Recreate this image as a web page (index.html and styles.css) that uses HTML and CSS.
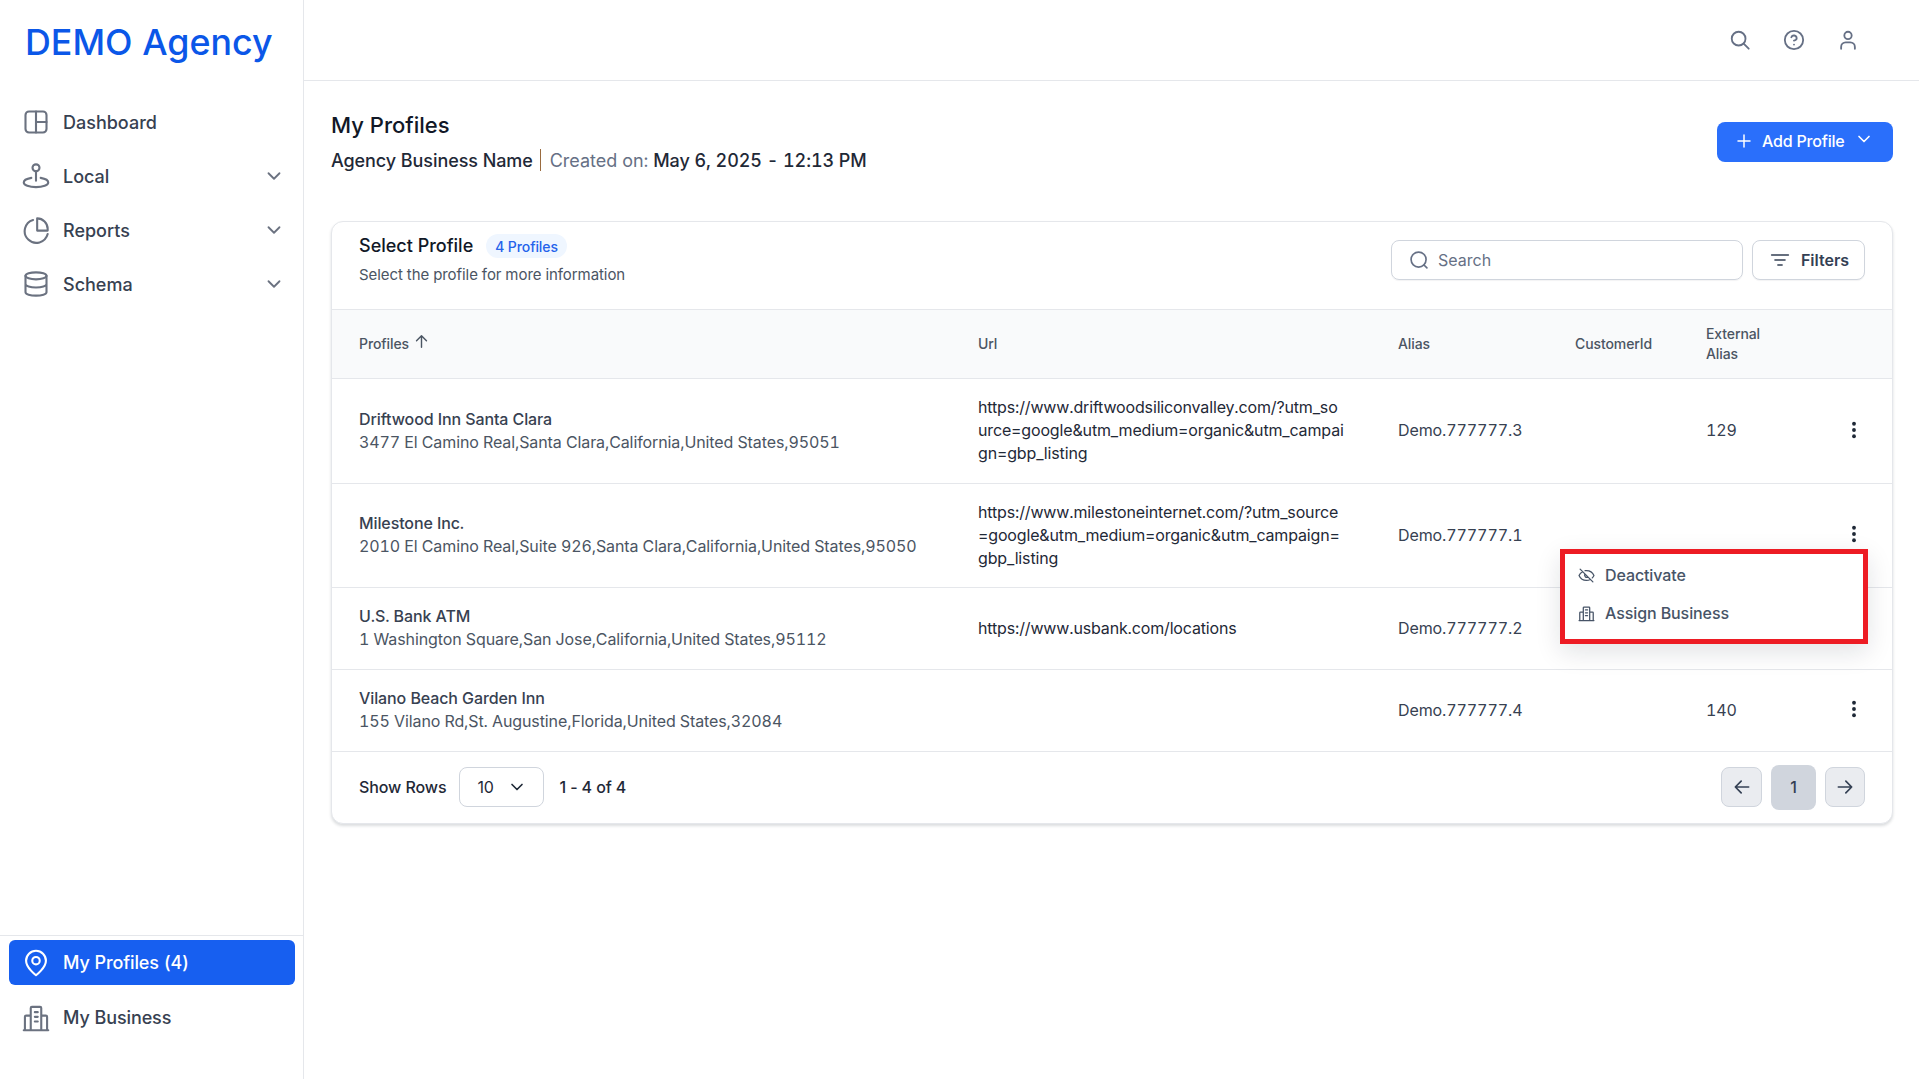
FILE: index.html
```html
<!DOCTYPE html>
<html lang="en">

<head>
    <meta charset="UTF-8">
    <meta name="viewport" content="width=device-width, initial-scale=1.0">
    <link rel="stylesheet" href="styles.css">
    <title>My Profiles</title>
</head>

<body>
    <aside class="sidebar">
        <div class="logo">DEMO Agency</div>
        <nav class="nav">
            <a class="nav-item">
                <svg class="nav-icon" viewBox="0 0 24 24"><rect x="3" y="3" width="18" height="18" rx="3"/><path d="M12 3v18M12 12h9"/></svg>
                <span>Dashboard</span>
            </a>
            <a class="nav-item">
                <svg class="nav-icon" viewBox="0 0 24 24"><circle cx="12" cy="5" r="3"/><path d="M12 8v8M8 13.6C4.500 14.200 1.500 15.400 1.500 17.500c0 2.400 4.700 4 10.500 4s10.500-1.600 10.500-4c0-2.100-3-3.300-6.500-3.900"/></svg>
                <span>Local</span>
                <svg class="nav-chevron" viewBox="0 0 24 24"><path d="M6 9l6 6 6-6"/></svg>
            </a>
            <a class="nav-item">
                <svg class="nav-icon" viewBox="0 0 24 24"><path d="M9.500 3.400A10 10 0 1 0 22 15.500"/><path d="M13 2a9 9 0 0 1 9 9v1.500h-9z"/></svg>
                <span>Reports</span>
                <svg class="nav-chevron" viewBox="0 0 24 24"><path d="M6 9l6 6 6-6"/></svg>
            </a>
            <a class="nav-item">
                <svg class="nav-icon" viewBox="0 0 24 24"><ellipse cx="12" cy="5" rx="9" ry="3"/><path d="M3 5v14c0 1.700 4 3 9 3s9-1.300 9-3V5M3 12c0 1.700 4 3 9 3s9-1.300 9-3"/></svg>
                <span>Schema</span>
                <svg class="nav-chevron" viewBox="0 0 24 24"><path d="M6 9l6 6 6-6"/></svg>
            </a>
        </nav>
        <div class="nav-bottom">
            <a class="nav-item active">
                <svg class="nav-icon" viewBox="0 0 24 24"><path d="M12 22.500s8.500-6.500 8.500-12.500a8.500 8.500 0 0 0-17 0c0 6 8.500 12.500 8.500 12.500z"/><circle cx="12" cy="10" r="3.200"/></svg>
                <span>My Profiles (4)</span>
            </a>
            <a class="nav-item">
                <svg class="nav-icon" viewBox="0 0 24 24"><path d="M1.500 22.500h21M7.500 22V3.500a1 1 0 0 1 1-1h7a1 1 0 0 1 1 1V22M7.500 10H3.500a1 1 0 0 0-1 1v11M16.500 10h4a1 1 0 0 1 1 1v11M11 7h2.500M11 11h2.500M11 15h2.500"/></svg>
                <span>My Business</span>
            </a>
        </div>
    </aside>

    <div class="content">
        <header class="topbar">
            <svg class="top-icon" viewBox="0 0 24 24"><circle cx="10.500" cy="10.500" r="7.500"/><path d="M16 16l5.500 5.500"/></svg>
            <svg class="top-icon" viewBox="0 0 24 24"><circle cx="12" cy="12" r="10"/><path d="M9.100 9a3 3 0 0 1 5.800 1c0 2-3 2.700-3 2.700M12 17h.01"/></svg>
            <svg class="top-icon" viewBox="0 0 24 24"><circle cx="12" cy="7" r="4"/><path d="M4.500 21.500v-2a5 5 0 0 1 5-5h5a5 5 0 0 1 5 5v2"/></svg>
        </header>

        <main class="page">
            <div class="page-head">
                <div>
                    <h1>My Profiles</h1>
                    <p class="page-sub">Agency Business Name<span class="sep"></span><span class="muted">Created on:</span> <span class="date">May 6, 2025 - 12:13 PM</span></p>
                </div>
                <button class="btn-primary">
                    <svg class="btn-plus" viewBox="0 0 24 24"><path d="M12 4v16M4 12h16"/></svg>
                    <span>Add Profile</span>
                    <svg class="btn-caret" viewBox="0 0 24 24"><path d="M6 9l6 6 6-6"/></svg>
                </button>
            </div>

            <section class="card">
                <div class="card-head">
                    <div>
                        <div class="card-title-row">
                            <h2>Select Profile</h2>
                            <span class="badge">4 Profiles</span>
                        </div>
                        <p class="card-sub">Select the profile for more information</p>
                    </div>
                    <div class="card-tools">
                        <div class="search">
                            <svg viewBox="0 0 24 24"><circle cx="11.500" cy="11.500" r="9"/><path d="M18 18l3.500 3.500"/></svg>
                            <span>Search</span>
                        </div>
                        <button class="btn-filter">
                            <svg viewBox="0 0 24 24"><path d="M2 6h20M6 12h12M9.500 18h5"/></svg>
                            <span>Filters</span>
                        </button>
                    </div>
                </div>

                <table class="table">
                    <colgroup>
                        <col class="col-profile">
                        <col class="col-url">
                        <col class="col-alias">
                        <col class="col-customer">
                        <col class="col-external">
                        <col>
                    </colgroup>
                    <thead>
                        <tr>
                            <th>Profiles <svg class="sort-icon" viewBox="0 0 24 24"><path d="M12 20V4M5 11l7-7 7 7"/></svg></th>
                            <th>Url</th>
                            <th>Alias</th>
                            <th>CustomerId</th>
                            <th>External<br>Alias</th>
                            <th></th>
                        </tr>
                    </thead>
                    <tbody>
                        <tr class="row-tall">
                            <td>
                                <div class="name">Driftwood Inn Santa Clara</div>
                                <div class="address">3477 El Camino Real,Santa Clara,California,United States,95051</div>
                            </td>
                            <td class="url">https://www.driftwoodsiliconvalley.com/?utm_source=google&amp;utm_medium=organic&amp;utm_campaign=gbp_listing</td>
                            <td>Demo.777777.3</td>
                            <td></td>
                            <td>129</td>
                            <td class="actions"><svg class="dots" viewBox="0 0 24 24"><circle cx="12" cy="4.500" r="2.300"/><circle cx="12" cy="12" r="2.300"/><circle cx="12" cy="19.500" r="2.300"/></svg></td>
                        </tr>
                        <tr class="row-tall row-second">
                            <td>
                                <div class="name">Milestone Inc.</div>
                                <div class="address">2010 El Camino Real,Suite 926,Santa Clara,California,United States,95050</div>
                            </td>
                            <td class="url">https://www.milestoneinternet.com/?utm_source=google&amp;utm_medium=organic&amp;utm_campaign=gbp_listing</td>
                            <td>Demo.777777.1</td>
                            <td></td>
                            <td></td>
                            <td class="actions"><svg class="dots" viewBox="0 0 24 24"><circle cx="12" cy="4.500" r="2.300"/><circle cx="12" cy="12" r="2.300"/><circle cx="12" cy="19.500" r="2.300"/></svg></td>
                        </tr>
                        <tr>
                            <td>
                                <div class="name">U.S. Bank ATM</div>
                                <div class="address">1 Washington Square,San Jose,California,United States,95112</div>
                            </td>
                            <td class="url">https://www.usbank.com/locations</td>
                            <td>Demo.777777.2</td>
                            <td></td>
                            <td></td>
                            <td></td>
                        </tr>
                        <tr>
                            <td>
                                <div class="name">Vilano Beach Garden Inn</div>
                                <div class="address">155 Vilano Rd,St. Augustine,Florida,United States,32084</div>
                            </td>
                            <td></td>
                            <td>Demo.777777.4</td>
                            <td></td>
                            <td>140</td>
                            <td class="actions"><svg class="dots" viewBox="0 0 24 24"><circle cx="12" cy="4.500" r="2.300"/><circle cx="12" cy="12" r="2.300"/><circle cx="12" cy="19.500" r="2.300"/></svg></td>
                        </tr>
                    </tbody>
                </table>

                <div class="card-foot">
                    <span>Show Rows</span>
                    <div class="rows-select">
                        <span>10</span>
                        <svg viewBox="0 0 24 24"><path d="M6 9l6 6 6-6"/></svg>
                    </div>
                    <span>1 - 4 of 4</span>
                    <div class="pager">
                        <button class="page-btn"><svg viewBox="0 0 24 24"><path d="M20 12H4M11 5l-7 7 7 7"/></svg></button>
                        <button class="page-num">1</button>
                        <button class="page-btn page-next"><svg viewBox="0 0 24 24"><path d="M4 12h16M13 5l7 7-7 7"/></svg></button>
                    </div>
                </div>

                <div class="row-menu">
                    <div class="menu-item">
                        <svg viewBox="0 0 24 24"><path d="M3 3l18 18M6.500 6.700C4 8.200 2.200 10.400 1.500 12c1.500 3.500 5.500 7 10.500 7 2 0 3.800-.5 5.400-1.400M10 5.200c.6-.1 1.300-.2 2-.2 5 0 9 3.500 10.500 7-.5 1.100-1.300 2.300-2.300 3.400M9.800 9.800a3.200 3.200 0 0 0 4.400 4.400"/></svg>
                        <span>Deactivate</span>
                    </div>
                    <div class="menu-item">
                        <svg viewBox="0 0 24 24"><path d="M1.500 22h21M7.500 22V4a1 1 0 0 1 1-1h7a1 1 0 0 1 1 1v18M7.500 10H3.500a1 1 0 0 0-1 1v11M16.500 10h4a1 1 0 0 1 1 1v11M10.500 7h3M10.500 11h3M10.500 15h3"/></svg>
                        <span>Assign Business</span>
                    </div>
                </div>
            </section>
        </main>
    </div>
</body>

</html>
```

FILE: styles.css
```css
* {
    box-sizing: border-box;
}

html,
body {
    margin: 0;
    height: 100%;
    overflow: hidden;
}

body {
    display: flex;
    background-color: #fff;
    color: #111827;
    font-family: Inter, "Liberation Sans", sans-serif;
    font-variant-numeric: tabular-nums;
}

h1,
h2,
p {
    margin: 0;
}

button {
    font-family: inherit;
    font-variant-numeric: inherit;
    cursor: pointer;
}

svg {
    fill: none;
    stroke: currentColor;
    stroke-width: 2;
    stroke-linecap: round;
    stroke-linejoin: round;
    flex-shrink: 0;
}

/* sidebar */
.sidebar {
    width: 304px;
    flex-shrink: 0;
    display: flex;
    flex-direction: column;
    border-right: 1px solid #e5e7eb;
}

.logo {
    height: 84px;
    padding-left: 25px;
    color: #0b57e8;
    font-size: 35.800px;
    font-weight: 500;
    line-height: 84px;
}

.nav {
    display: flex;
    flex-direction: column;
    gap: 4px;
    padding: 13px 8px 0 9px;
    flex-grow: 1;
}

.nav-item {
    display: flex;
    align-items: center;
    height: 50px;
    padding: 0 10px 0 13px;
    border-radius: 6px;
    color: #374151;
    font-size: 18px;
    font-weight: 500;
}

.nav-icon {
    width: 28px;
    height: 28px;
    margin-right: 13px;
    color: #6b7280;
    stroke-width: 1.800;
}

.nav-chevron {
    width: 22px;
    height: 22px;
    margin-left: auto;
    color: #6b7280;
}

.nav-bottom {
    display: flex;
    flex-direction: column;
    gap: 10px;
    height: 144px;
    padding: 4px 8px 0 9px;
    border-top: 1px solid #e5e7eb;
    letter-spacing: -0.100px;
}

.nav-bottom .nav-item {
    height: 45px;
}

.nav-item.active {
    background-color: #175ff0;
    color: #fff;
}

.nav-item.active .nav-icon {
    color: #fff;
}

/* top bar */
.content {
    flex-grow: 1;
    min-width: 0;
    display: flex;
    flex-direction: column;
}

.topbar {
    height: 81px;
    flex-shrink: 0;
    display: flex;
    align-items: center;
    justify-content: flex-end;
    gap: 32px;
    padding-right: 60px;
    border-bottom: 1px solid #e5e7eb;
}

.top-icon {
    width: 22px;
    height: 22px;
    color: #667085;
}

/* page */
.page {
    position: relative;
    padding: 29px 26px 0 27px;
}

.page-head {
    display: flex;
    justify-content: space-between;
    align-items: flex-start;
    height: 111px;
}

h1 {
    font-size: 22px;
    font-weight: 500;
    line-height: 30px;
    color: #111827;
}

.page-sub {
    margin-top: 9px;
    font-size: 18px;
    font-weight: 500;
    letter-spacing: -0.080px;
    line-height: 24px;
    color: #1f2937;
}

.sep {
    display: inline-block;
    width: 1px;
    height: 22px;
    margin: 0 9px 0 7px;
    background-color: #9a6b3f;
    vertical-align: -4px;
}

.muted {
    color: #667085;
    font-weight: 400;
    letter-spacing: 0;
}

.btn-primary {
    display: flex;
    align-items: center;
    height: 40px;
    width: 176px;
    margin-top: 12px;
    padding: 0 0 2px 18px;
    border: 0;
    border-radius: 8px;
    background-color: #2a6ffb;
    color: #fff;
    font-size: 16px;
    font-weight: 500;
    letter-spacing: -0.200px;
}

.btn-plus {
    width: 18px;
    height: 18px;
    margin-right: 9px;
}

.btn-caret {
    width: 20px;
    height: 20px;
    margin-left: 9px;
    margin-top: -4px;
}

/* card */
.card {
    position: relative;
    border: 1px solid #e5e7eb;
    border-radius: 12px;
    background-color: #fff;
    box-shadow: 0 2px 3px rgba(16, 24, 40, 0.15);
}

.card-head {
    display: flex;
    justify-content: space-between;
    align-items: flex-start;
    height: 88px;
    padding: 11px 27px 0;
    border-bottom: 1px solid #e5e7eb;
}

.card-title-row {
    display: flex;
    align-items: center;
    gap: 13px;
}

h2 {
    font-size: 18px;
    font-weight: 500;
    line-height: 26px;
    color: #111827;
}

.badge {
    padding: 0 9px;
    height: 24px;
    border-radius: 12px;
    background-color: #eff6ff;
    color: #2563eb;
    font-size: 14px;
    font-weight: 500;
    letter-spacing: -0.100px;
    line-height: 26px;
}

.card-sub {
    margin-top: 6px;
    color: #4b5563;
    font-size: 15px;
    letter-spacing: -0.060px;
    line-height: 20px;
}

.card-tools {
    display: flex;
    gap: 9px;
    margin-top: 7px;
}

.search {
    display: flex;
    align-items: center;
    gap: 9px;
    width: 352px;
    height: 40px;
    padding: 0 0 1px 17px;
    border: 1px solid #d0d5dd;
    border-radius: 8px;
    box-shadow: 0 1px 1px rgba(16, 24, 40, 0.05);
    color: #667085;
    font-size: 16px;
}

.search svg {
    width: 20px;
    height: 20px;
    color: #667085;
}

.btn-filter {
    display: flex;
    align-items: center;
    justify-content: center;
    gap: 11px;
    width: 113px;
    height: 40px;
    padding: 0 0 1px 2px;
    border: 1px solid #d0d5dd;
    border-radius: 8px;
    background-color: #fff;
    box-shadow: 0 1px 1px rgba(16, 24, 40, 0.05);
    color: #344054;
    font-size: 16px;
    font-weight: 600;
}

.btn-filter svg {
    width: 20px;
    height: 20px;
}

/* table */
.table {
    width: 100%;
    table-layout: fixed;
    border-collapse: collapse;
    color: #374151;
    font-size: 16px;
    letter-spacing: -0.100px;
}

.col-profile {
    width: 619px;
}

.col-url {
    width: 420px;
}

.col-alias {
    width: 177px;
}

.col-customer {
    width: 131px;
}

.col-external {
    width: 120px;
}

.table th {
    height: 68px;
    padding: 0 0 0 27px;
    border-bottom: 1px solid #e5e7eb;
    background-color: #f9fafb;
    color: #4b5563;
    font-size: 14px;
    font-weight: 500;
    line-height: 20px;
    text-align: left;
}

.sort-icon {
    width: 17px;
    height: 17px;
    margin-left: 0;
    vertical-align: -1px;
}

.table td {
    height: 82px;
    padding: 0 0 0 27px;
    border-bottom: 1px solid #e5e7eb;
    line-height: 23px;
}

.table .row-tall td {
    height: 105px;
}

.table .row-second td {
    height: 104px;
}

.name {
    font-weight: 500;
    color: #374151;
}

.address {
    color: #4b5563;
}

.table .url {
    padding-right: 27px;
    color: #1f2937;
    letter-spacing: -0.150px;
    word-break: break-all;
}

.table .actions {
    padding: 0 0 0 45px;
}

.dots {
    display: block;
    width: 20px;
    height: 20px;
    margin-top: -2px;
    fill: #1f2937;
    stroke: none;
}

/* footer */
.card-foot {
    display: flex;
    align-items: center;
    height: 71px;
    padding: 0 27px;
    color: #1f2937;
    font-size: 16px;
    font-weight: 500;
    font-variant-numeric: normal;
    letter-spacing: -0.100px;
}

.rows-select {
    display: flex;
    align-items: center;
    gap: 13px;
    width: 85px;
    height: 40px;
    margin: 0 15px 0 13px;
    padding-left: 17px;
    border: 1px solid #d0d5dd;
    border-radius: 8px;
    font-weight: 400;
}

.rows-select svg {
    width: 20px;
    height: 20px;
}

.pager {
    display: flex;
    align-items: center;
    gap: 9px;
    margin-left: auto;
}

.page-btn {
    display: flex;
    align-items: center;
    justify-content: center;
    width: 41px;
    height: 40px;
    padding: 0;
    border: 1px solid #d0d5dd;
    border-radius: 8px;
    background-color: #eaecf0;
    color: #344054;
}

.page-next {
    width: 40px;
}

.page-btn svg {
    width: 20px;
    height: 20px;
}

.page-num {
    width: 45px;
    height: 45px;
    padding: 0;
    border: 0;
    border-radius: 8px;
    background-color: #d0d5dd;
    color: #344054;
    font-size: 16px;
    font-weight: 500;
}

/* row menu, with the red marker border */
.row-menu {
    position: absolute;
    top: 327px;
    right: 24px;
    width: 308px;
    height: 95px;
    padding: 2px 0 0;
    border: 5px solid #ed1c24;
    background-color: #fff;
    box-shadow: 0 8px 24px rgba(16, 24, 40, 0.12);
}

.menu-item {
    display: flex;
    align-items: center;
    gap: 10px;
    height: 38px;
    padding-left: 13px;
    color: #475467;
    font-size: 16px;
    font-weight: 500;
    letter-spacing: -0.100px;
}

.menu-item svg {
    width: 17px;
    height: 17px;
    stroke-width: 1.800;
}
```
